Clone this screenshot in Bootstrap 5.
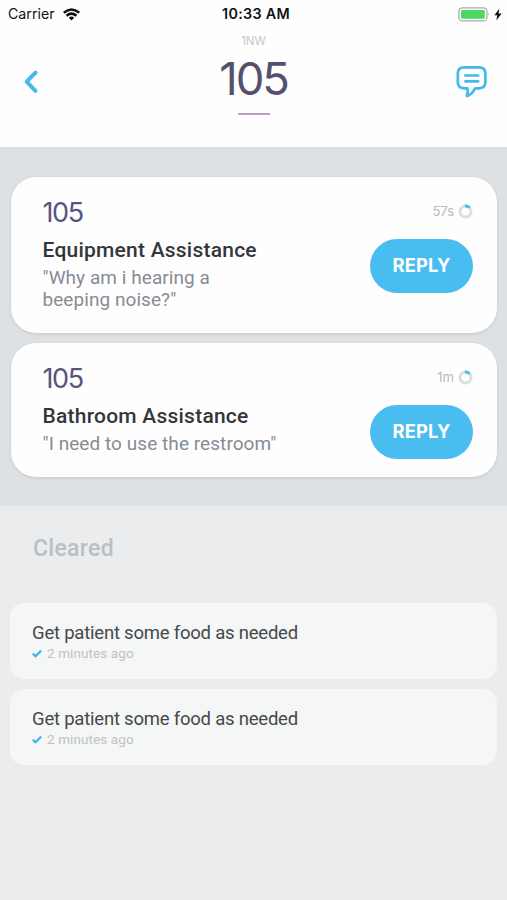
<!DOCTYPE html>
<html lang="en">
<head>
<meta charset="utf-8">
<meta name="viewport" content="width=device-width, initial-scale=1">
<title>Room 105</title>
<link href="https://cdn.jsdelivr.net/npm/bootstrap@5.3.0/dist/css/bootstrap.min.css" rel="stylesheet">
<style>
body{font-family:Roboto,"Liberation Sans",sans-serif;background:#eaecee;color:#3b3e43;overflow:hidden}
svg{display:block;flex:none}
.inter{font-family:Inter,"Liberation Sans",sans-serif}
.top-area{height:147px;background:#fefefe}
.status{height:28px;padding:0 5px 0 8px;color:#111}
.status>div{flex:1 1 0}
.carrier{font-size:14.2px;line-height:28px}
.clock{font-size:14.3px;font-weight:600;line-height:28px;letter-spacing:.3px;flex:none!important;margin-left:2px}
.head-row{height:119px;padding:0 19px 0 22px}
.side{width:32px;padding-top:37px}
.middle{margin-right:3px}
.unit{font-size:11.5px;line-height:14px;margin-top:6px;color:#c5c8cc}
.room-big{font-size:45.5px;line-height:50px;margin-top:6px;font-weight:400;color:#55506f;letter-spacing:-2.2px}
.rule{width:32px;height:2px;background:#bf9cc4;margin-top:9px}
.active-area{height:359px;background:#dee1e4;padding:30px 10px 0 11px}
.request{border:0;border-radius:25px;background:#fefefe;box-shadow:0 1px 3px rgba(60,70,80,.16);padding:20px 24px 0 31.5px}
.tall{height:156px;margin-bottom:10px}
.short{height:134px}
.room{font-size:27px;line-height:30px;font-weight:400;color:#585380;letter-spacing:-1.4px;margin-top:1px}
.kind{font-size:21px;line-height:26px;font-weight:500;margin-top:9px;letter-spacing:.23px;color:#34363a;white-space:nowrap}
.quote{font-size:19px;line-height:22px;margin-top:4px;color:#858c94;white-space:nowrap;letter-spacing:.06px}
.age{font-size:13px;line-height:16px;gap:4px;margin-top:6px;color:#b4b9be}
.reply{width:103px;height:54px;margin-top:20px;border:0;background:#4abdf0;color:#fff;font-size:18.3px;font-weight:650;letter-spacing:.2px}
.reply:hover{background:#3bb2e8;color:#fff}
.cleared-title{font-size:23px;line-height:28px;font-weight:500;color:#b9bfc4;margin:29px 0 40px 33px;letter-spacing:.3px}
.cleared{height:76px;margin:0 10px 10px;border-radius:14px;background:#f5f6f6;padding:18px 22px 0}
.task-name{font-size:18.5px;line-height:24px;color:#45484c;letter-spacing:-.22px}
.when{font-size:13.5px;line-height:17px;gap:5px;color:#bec2c7;letter-spacing:.1px}
</style>
<script src="https://cdn.jsdelivr.net/npm/bootstrap@5.3.0/dist/js/bootstrap.bundle.min.js"></script>
</head>
<body>
<header class="top-area">
  <div class="status inter d-flex align-items-center">
    <div class="d-flex align-items-center gap-2">
      <span class="carrier">Carrier</span>
      <svg width="17" height="13" viewBox="0 0 17 13" fill="none" stroke="#111" stroke-width="2.5"><path d="M.8 4.700Q8.500-1.800 16.200 4.700M3.500 7.700Q8.500 3.500 13.500 7.700"/><path d="M8.500 12.400 5.800 9.700Q8.500 7.500 11.200 9.700Z" fill="#111" stroke="none"/></svg>
    </div>
    <div class="clock">10:33 AM</div>
    <div class="d-flex justify-content-end align-items-center gap-1">
      <svg width="32" height="15" viewBox="0 0 32 15"><rect x=".9" y=".9" width="28" height="13" rx="3.5" fill="#fff" stroke="#a9abab" stroke-width="1.3"/><rect x="3" y="3" width="23.8" height="8.8" rx="1.3" fill="#4bd763"/><path d="M30.300 5.200Q32 7.400 30.300 9.600Z" fill="#a9abab"/></svg>
      <svg width="8" height="13" viewBox="0 0 8 13"><path d="M5.400.500.400 7.300h2.900L2.300 12.500 7.700 5.400H4.500Z" fill="#111"/></svg>
    </div>
  </div>
  <div class="head-row d-flex justify-content-between">
    <div class="side">
      <svg width="17" height="34" viewBox="0 0 17 34" fill="none" stroke="#45b9eb" stroke-width="4" stroke-linecap="round" stroke-linejoin="round"><path d="M13.500 7.600 4.600 16.700l8.900 9.100"/></svg>
    </div>
    <div class="middle inter d-flex flex-column align-items-center">
      <div class="unit">1NW</div>
      <div class="room-big">105</div>
      <div class="rule"></div>
    </div>
    <div class="side">
      <svg width="32" height="34" viewBox="0 0 32 34" fill="none" stroke="#45b9eb" stroke-width="2.7" stroke-linecap="round" stroke-linejoin="round"><path d="M8 2.300h15.200q6.200 0 6.200 6.200v8.600q0 6.200-6.200 6.200h-4.200Q16.500 29 11.500 30.900Q10.600 31.200 10.900 30.200Q12.300 27 11.400 23.300H8q-6.200 0-6.200-6.200V8.500q0-6.200 6.200-6.200Z"/><path d="M9.400 10.500h12.800M9.400 16.300h12.800"/></svg>
    </div>
  </div>
</header>
<main>
  <section class="active-area">
    <article class="card request tall flex-row justify-content-between">
      <div>
        <div class="room inter">105</div>
        <div class="kind">Equipment Assistance</div>
        <div class="quote">"Why am i hearing a<br>beeping noise?"</div>
      </div>
      <div class="inter d-flex flex-column align-items-end">
        <div class="age d-flex align-items-center"><span>57s</span><svg width="15" height="15" viewBox="0 0 15 15" fill="none" stroke-width="3"><circle cx="7.500" cy="7.500" r="5.500" stroke="#dcdedf"/><path d="M6.900 2A5.500 5.500 0 0 1 11.500 3.700" stroke="#4abdf0"/></svg></div>
        <button class="btn reply rounded-pill p-0" type="button">REPLY</button>
      </div>
    </article>
    <article class="card request short flex-row justify-content-between">
      <div>
        <div class="room inter">105</div>
        <div class="kind">Bathroom Assistance</div>
        <div class="quote">"I need to use the restroom"</div>
      </div>
      <div class="inter d-flex flex-column align-items-end">
        <div class="age d-flex align-items-center"><span>1m</span><svg width="15" height="15" viewBox="0 0 15 15" fill="none" stroke-width="3"><circle cx="7.500" cy="7.500" r="5.500" stroke="#dcdedf"/><path d="M6.900 2A5.500 5.500 0 0 1 11.500 3.700" stroke="#4abdf0"/></svg></div>
        <button class="btn reply rounded-pill p-0" type="button">REPLY</button>
      </div>
    </article>
  </section>
  <section>
    <div class="d-flex"><h2 class="cleared-title">Cleared</h2></div>
    <article class="cleared">
      <div class="task-name">Get patient some food as needed</div>
      <div class="when d-flex align-items-center"><svg width="10" height="9" viewBox="0 0 10 9" fill="none" stroke="#42b4ee" stroke-width="2.200"><path d="M.8 4.600 3.500 7.200 9.200 1.600"/></svg><span>2 minutes ago</span></div>
    </article>
    <article class="cleared">
      <div class="task-name">Get patient some food as needed</div>
      <div class="when d-flex align-items-center"><svg width="10" height="9" viewBox="0 0 10 9" fill="none" stroke="#42b4ee" stroke-width="2.200"><path d="M.8 4.600 3.500 7.200 9.200 1.600"/></svg><span>2 minutes ago</span></div>
    </article>
  </section>
</main>
</body>
</html>
